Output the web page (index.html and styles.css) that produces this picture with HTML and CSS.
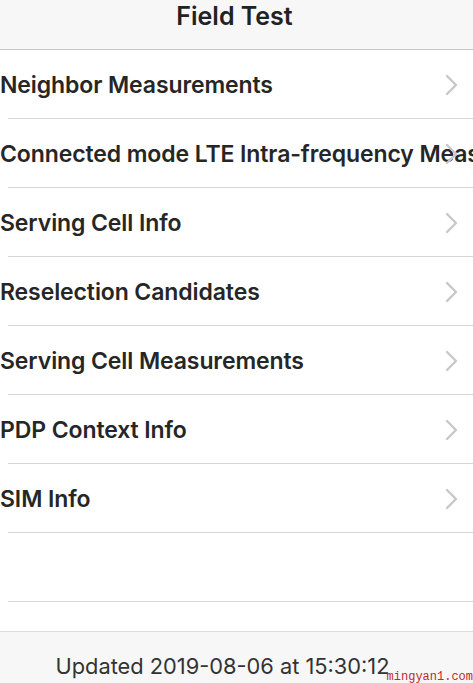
FILE: index.html
```html
<!DOCTYPE html>
<html>
<head>
<meta charset="utf-8">
<link rel="stylesheet" href="styles.css">
</head>
<body>
<div class="screen">
  <header class="nav"><h1 class="title">Field Test</h1></header>
  <ul class="list">
    <li class="row"><span class="label">Neighbor Measurements</span><span class="chev"><svg width="14" height="22" viewBox="0 0 14 22"><path d="M2 2 L11 11 L2 20" fill="none" stroke="#c7c7cc" stroke-width="2.4" stroke-linecap="round" stroke-linejoin="round"/></svg></span></li>
    <li class="row"><span class="label">Connected mode LTE Intra-frequency Measurements</span><span class="chev"><svg width="14" height="22" viewBox="0 0 14 22"><path d="M2 2 L11 11 L2 20" fill="none" stroke="#c7c7cc" stroke-width="2.4" stroke-linecap="round" stroke-linejoin="round"/></svg></span></li>
    <li class="row"><span class="label">Serving Cell Info</span><span class="chev"><svg width="14" height="22" viewBox="0 0 14 22"><path d="M2 2 L11 11 L2 20" fill="none" stroke="#c7c7cc" stroke-width="2.4" stroke-linecap="round" stroke-linejoin="round"/></svg></span></li>
    <li class="row"><span class="label">Reselection Candidates</span><span class="chev"><svg width="14" height="22" viewBox="0 0 14 22"><path d="M2 2 L11 11 L2 20" fill="none" stroke="#c7c7cc" stroke-width="2.4" stroke-linecap="round" stroke-linejoin="round"/></svg></span></li>
    <li class="row"><span class="label">Serving Cell Measurements</span><span class="chev"><svg width="14" height="22" viewBox="0 0 14 22"><path d="M2 2 L11 11 L2 20" fill="none" stroke="#c7c7cc" stroke-width="2.4" stroke-linecap="round" stroke-linejoin="round"/></svg></span></li>
    <li class="row"><span class="label">PDP Context Info</span><span class="chev"><svg width="14" height="22" viewBox="0 0 14 22"><path d="M2 2 L11 11 L2 20" fill="none" stroke="#c7c7cc" stroke-width="2.4" stroke-linecap="round" stroke-linejoin="round"/></svg></span></li>
    <li class="row"><span class="label">SIM Info</span><span class="chev"><svg width="14" height="22" viewBox="0 0 14 22"><path d="M2 2 L11 11 L2 20" fill="none" stroke="#c7c7cc" stroke-width="2.4" stroke-linecap="round" stroke-linejoin="round"/></svg></span></li>
    <li class="row empty"></li>
  </ul>
  <div class="spacer"></div>
  <footer class="footer">
    <span class="updated">Updated 2019-08-06 at 15:30:12</span>
    <span class="mark">mingyan1.com</span>
  </footer>
</div>
</body>
</html>
```
FILE: styles.css
```css
html, body {
  margin: 0;
  padding: 0;
  background: #fff;
}
.screen {
  width: 473px;
  height: 683px;
  overflow: hidden;
  display: flex;
  flex-direction: column;
  font-family: "Inter", "Liberation Sans", sans-serif;
  color: #222;
}
.nav {
  height: 49px;
  flex: none;
  background: #f7f7f7;
  border-bottom: 1px solid #c8c8c8;
  display: flex;
  justify-content: center;
  align-items: flex-start;
}
.title {
  margin: 1px 4px 0 0;
  font-size: 25px;
  font-weight: 600;
  line-height: 30px;
  color: #222;
}
.list {
  list-style: none;
  margin: 0;
  padding: 0;
  flex: none;
}
.row {
  height: 68px;
  padding-bottom: 1px;
  position: relative;
  display: flex;
  align-items: center;
  overflow: hidden;
}
.row::after {
  content: "";
  position: absolute;
  left: 8px;
  right: 0;
  bottom: 0;
  height: 1px;
  background: #d6d6d6;
}
.label {
  font-size: 23px;
  font-weight: 600;
  white-space: nowrap;
  letter-spacing: -0.1px;
  margin-top: 1px;
  color: #262626;
}
.chev {
  position: absolute;
  left: 445px;
  top: 24px;
  display: block;
  line-height: 0;
}
.spacer {
  height: 29px;
  flex: none;
}
.footer {
  flex: 1;
  background: #f7f7f7;
  border-top: 1px solid #dcdcdc;
  position: relative;
  display: flex;
  justify-content: center;
  align-items: flex-start;
}
.updated {
  margin-top: 21px;
  margin-right: 28px;
  font-size: 21.8px;
  font-weight: 400;
  color: #333;
}
.mark {
  position: absolute;
  right: 0;
  bottom: 0;
  font-family: "Liberation Mono", monospace;
  font-size: 12px;
  line-height: 12px;
  color: #c0282b;
}
```
